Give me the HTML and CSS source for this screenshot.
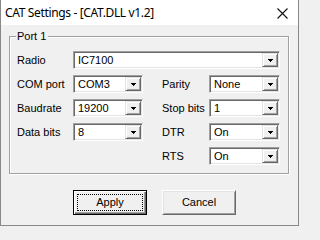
FILE: index.html
```html
<!DOCTYPE html>
<html>
<head>
<meta charset="utf-8">
<link rel="stylesheet" href="styles.css">
</head>
<body>
<div class="window">
  <div class="titlebar">
    <span class="title">CAT Settings - [CAT.DLL v1.2]</span>
    <svg class="close" width="11" height="11" viewBox="0 0 11 11"><path d="M0.5 0.5 L10.5 10.5 M10.5 0.5 L0.5 10.5" stroke="#111" stroke-width="1.1" fill="none"/></svg>
  </div>
  <div class="client">
    <div class="group">
      <span class="legend">Port 1</span>
      <div class="grid">
        <span class="lbl">Radio</span>
        <div class="combo wide"><span class="val">IC7100</span><span class="btn"><svg width="5" height="3" viewBox="0 0 5 3" shape-rendering="crispEdges"><rect x="0" y="0" width="5" height="1"/><rect x="1" y="1" width="3" height="1"/><rect x="2" y="2" width="1" height="1"/></svg></span></div>

        <span class="lbl">COM port</span>
        <div class="combo"><span class="val">COM3</span><span class="btn"><svg width="5" height="3" viewBox="0 0 5 3" shape-rendering="crispEdges"><rect x="0" y="0" width="5" height="1"/><rect x="1" y="1" width="3" height="1"/><rect x="2" y="2" width="1" height="1"/></svg></span></div>
        <span class="lbl lbl2">Parity</span>
        <div class="combo"><span class="val">None</span><span class="btn"><svg width="5" height="3" viewBox="0 0 5 3" shape-rendering="crispEdges"><rect x="0" y="0" width="5" height="1"/><rect x="1" y="1" width="3" height="1"/><rect x="2" y="2" width="1" height="1"/></svg></span></div>

        <span class="lbl">Baudrate</span>
        <div class="combo"><span class="val">19200</span><span class="btn"><svg width="5" height="3" viewBox="0 0 5 3" shape-rendering="crispEdges"><rect x="0" y="0" width="5" height="1"/><rect x="1" y="1" width="3" height="1"/><rect x="2" y="2" width="1" height="1"/></svg></span></div>
        <span class="lbl lbl2">Stop bits</span>
        <div class="combo"><span class="val">1</span><span class="btn"><svg width="5" height="3" viewBox="0 0 5 3" shape-rendering="crispEdges"><rect x="0" y="0" width="5" height="1"/><rect x="1" y="1" width="3" height="1"/><rect x="2" y="2" width="1" height="1"/></svg></span></div>

        <span class="lbl">Data bits</span>
        <div class="combo"><span class="val">8</span><span class="btn"><svg width="5" height="3" viewBox="0 0 5 3" shape-rendering="crispEdges"><rect x="0" y="0" width="5" height="1"/><rect x="1" y="1" width="3" height="1"/><rect x="2" y="2" width="1" height="1"/></svg></span></div>
        <span class="lbl lbl2">DTR</span>
        <div class="combo"><span class="val">On</span><span class="btn"><svg width="5" height="3" viewBox="0 0 5 3" shape-rendering="crispEdges"><rect x="0" y="0" width="5" height="1"/><rect x="1" y="1" width="3" height="1"/><rect x="2" y="2" width="1" height="1"/></svg></span></div>

        <span class="lbl lbl2 rts">RTS</span>
        <div class="combo rtsc"><span class="val">On</span><span class="btn"><svg width="5" height="3" viewBox="0 0 5 3" shape-rendering="crispEdges"><rect x="0" y="0" width="5" height="1"/><rect x="1" y="1" width="3" height="1"/><rect x="2" y="2" width="1" height="1"/></svg></span></div>
      </div>
    </div>
    <div class="buttons">
      <div class="button default">Apply</div>
      <div class="button">Cancel</div>
    </div>
  </div>
</div>
</body>
</html>
```
FILE: styles.css
```css
html, body {
  margin: 0;
  padding: 0;
  background: #f0f0f0;
}
.window {
  width: 299px;
  height: 226px;
  box-sizing: border-box;
  border: 1px solid #888;
  border-top: none;
  background: #f0f0f0;
  font-family: "Liberation Sans", Arial, sans-serif;
  font-size: 11px;
  color: #000;
  overflow: hidden;
}
.titlebar {
  height: 25px;
  background: #fff;
  display: flex;
  align-items: center;
  padding-left: 4px;
}
.title {
  font-family: "Noto Sans", "Open Sans", sans-serif;
  font-size: 12px;
  letter-spacing: -0.35px;
  color: #000;
  line-height: 25px;
}
.close {
  margin-left: auto;
  margin-right: 10px;
  margin-top: 2px;
}
.client {
  padding: 11px 0 0 8px;
}
.group {
  position: relative;
  width: 280px;
  height: 138px;
  box-sizing: border-box;
  border: 1px solid #a0a0a0;
  box-shadow: inset 1px 1px 0 #fff, 1px 1px 0 #fff;
  padding: 14px 7px 0 7px;
}
.legend {
  position: absolute;
  top: -7px;
  left: 6px;
  padding: 0 2px 0 1px;
  background: #f0f0f0;
  line-height: 13px;
}
.grid {
  display: grid;
  grid-template-columns: 56px 70px 19px 47px 71px;
  grid-template-rows: repeat(5, 18px);
  row-gap: 6px;
  align-items: center;
}
.lbl {
  grid-column: 1;
  line-height: 18px;
}
.lbl2 {
  grid-column: 4;
}
.combo {
  height: 18px;
  box-sizing: border-box;
  border: 1px solid;
  border-color: #a0a0a0 #fff #fff #a0a0a0;
  box-shadow: inset 1px 1px 0 #696969, inset -1px -1px 0 #e3e3e3;
  background: #fff;
  display: flex;
  align-items: stretch;
  padding: 1px;
}
.combo.wide {
  grid-column: 2 / 6;
}
.lbl2 + .combo {
  grid-column: 5;
}
.rts {
  grid-row: 5;
}
.rtsc {
  grid-row: 5;
}
.val {
  flex: 1;
  padding-left: 3px;
  line-height: 14px;
  white-space: nowrap;
}
.btn {
  width: 16px;
  box-sizing: border-box;
  background: #f0f0f0;
  border: 1px solid;
  border-color: #e3e3e3 #696969 #696969 #e3e3e3;
  box-shadow: inset 1px 1px 0 #fff, inset -1px -1px 0 #a0a0a0;
  display: flex;
  align-items: center;
  justify-content: center;
  padding-top: 1px;
}
.buttons {
  display: flex;
  gap: 15px;
  margin-top: 16px;
  padding-left: 64px;
}
.button {
  position: relative;
  width: 74px;
  height: 25px;
  box-sizing: border-box;
  background: #f0f0f0;
  border: 1px solid;
  border-color: #fff #696969 #696969 #fff;
  box-shadow: inset 1px 1px 0 #e3e3e3, inset -1px -1px 0 #a0a0a0;
  display: flex;
  align-items: center;
  justify-content: center;
  line-height: 13px;
}
.button.default {
  border-color: #000;
  box-shadow: inset 1px 1px 0 #fff, inset -1px -1px 0 #696969, inset -2px -2px 0 #a0a0a0;
}
.button.default::after {
  content: "";
  position: absolute;
  left: 3px;
  top: 3px;
  right: 3px;
  bottom: 3px;
  border: 1px dotted #000;
}
```
